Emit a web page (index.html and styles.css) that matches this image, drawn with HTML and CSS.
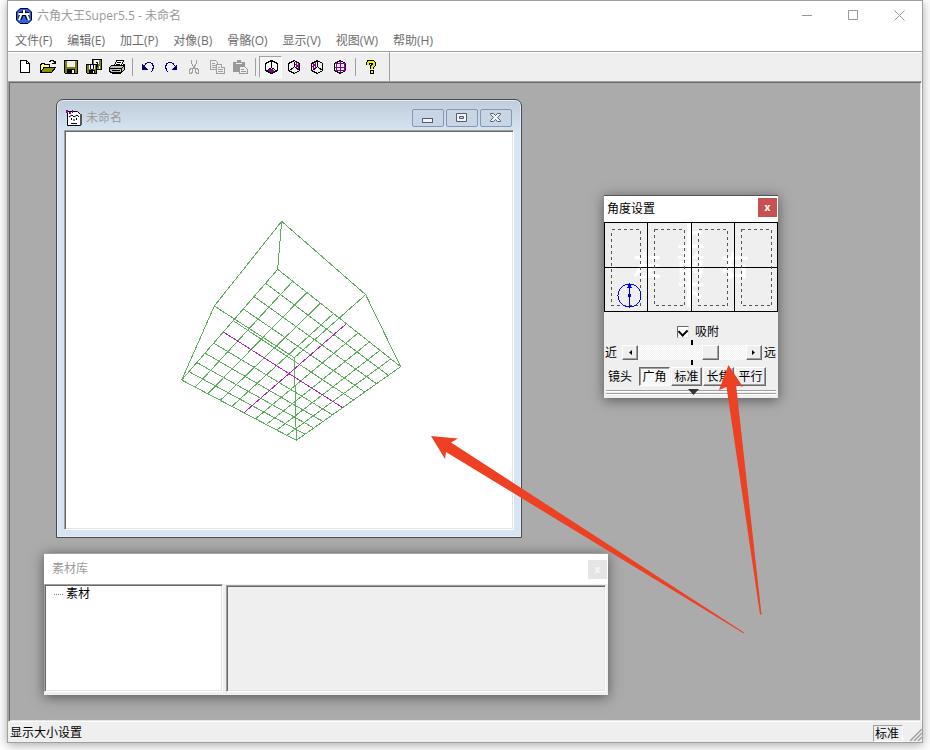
FILE: index.html
```html
<!DOCTYPE html>
<html lang="zh-CN">
<head>
  <meta charset="UTF-8">
  <meta name="viewport" content="width=device-width, initial-scale=1">
  <title>六角大王Super5.5 - 未命名</title>
  <link rel="stylesheet" href="styles.css">
</head>
<body>
  <div class="app">
    <header class="titlebar">
      <svg class="app-icon" width="16" height="16" viewBox="0 0 16 16">
        <path d="M4 .5h8L15.500 4v8L12 15.500H4L.5 12V4z" fill="#2c62e8" stroke="#000"/>
        <path d="M8 2.500v2M3 6h10M5.500 7L3.500 11.500M10.500 7l2 4.500" fill="none" stroke="#000" stroke-width="4"/>
        <path d="M8 2v3M2.500 6h11M5.500 6L3 12M10.500 6l2.500 6" fill="none" stroke="#fff" stroke-width="2"/>
      </svg>
      <h1>六角大王Super5.5 - 未命名</h1>
      <div class="win-buttons">
        <button aria-label="最小化"><svg width="11" height="11"><path d="M0 5.500h10"/></svg></button>
        <button aria-label="最大化"><svg width="11" height="11"><path d="M.5.5h9v9h-9z"/></svg></button>
        <button aria-label="关闭"><svg width="11" height="11"><path d="M.5.5l10 10M10.500.5l-10 10"/></svg></button>
      </div>
    </header>

    <nav class="menubar">
      <button>文件(F)</button>
      <button>编辑(E)</button>
      <button>加工(P)</button>
      <button>对像(B)</button>
      <button>骨骼(O)</button>
      <button>显示(V)</button>
      <button>视图(W)</button>
      <button>帮助(H)</button>
    </nav>

    <div class="toolbar">
      <div class="tools">
        <button aria-label="新建"><svg viewBox="0 0 16 16"><path d="M3.500 1.500h6l3 3v9h-9z" fill="#fff" stroke="#000"/><path d="M9.500 1.500v3h3" fill="none" stroke="#000"/></svg></button>
        <button aria-label="打开"><svg viewBox="0 0 16 16"><path d="M.5 13.500v-8h1v-1h3v1h5v3" fill="#ffff80" stroke="#000"/><path d="M.5 13.500l3.500-5h11.500l-4 5z" fill="#8c8c00" stroke="#000"/><path d="M9 2.500h1v-1h3v1h1v2M12 4.500h4M15.500 2v3" fill="none" stroke="#000"/></svg></button>
        <button aria-label="保存"><svg viewBox="0 0 16 16"><path d="M1.500 1.500h13v13h-12l-1-1z" fill="#808000" stroke="#000"/><path d="M4 2h8v6H4z" fill="#efefef"/><path d="M4 10h8v4H4z" fill="#000"/><path d="M9 11h2v3H9z" fill="#fff"/></svg></button>
        <button aria-label="全部保存"><svg viewBox="0 0 16 16"><path d="M6.500.5h9v10h-9z" fill="#808000" stroke="#000"/><path d="M8 1h5v4H8z" fill="#fff"/><path d="M.5 5.500h10v9H1.500l-1-1z" fill="#808000" stroke="#000"/><path d="M3 6h6v4H3z" fill="#fff"/><path d="M3 11h6v3H3z" fill="#000"/><path d="M7 12h1v2H7zM13 7h1v3h-1z" fill="#fff"/><path d="M5 5h2v1H5zM4 6h1v4H4zM7 6h1v4H7zM5 10h2v1H5zM10 3h2v1h-2zM11 3h1v5h-1z" fill="#000080"/></svg></button>
        <button aria-label="打印"><svg viewBox="0 0 16 16"><path d="M5.500 6.500l2-5h7l-2 5" fill="#fff" stroke="#000"/><path d="M8 3.500h4M7 5.500h4" stroke="#000"/><path d="M2.500 6.500h11l2-1v5l-3 3h-10l-2-1v-4z" fill="#bbb" stroke="#000"/><path d="M1 9.500h11.500v4M12.500 9.500l3-3M3 11.500h8M3 14.500h9M13.500 12.500l2-2" fill="none" stroke="#000"/><path d="M8 10h2v1H8z" fill="#e8e800"/></svg></button>
        <span class="sep"></span>
        <button aria-label="撤销"><svg viewBox="0 0 16 16"><path d="M3.500 8l2-3 2-1.500h3l2 1.500 1 3-1 3-1 2" fill="none" stroke="#000080"/><path d="M2 5v6h6z" fill="#000080"/></svg></button>
        <button aria-label="重做"><svg viewBox="0 0 16 16"><path d="M12.500 8l-2-3-2-1.500h-3l-2 1.500-1 3 1 3 1 2" fill="none" stroke="#000080"/><path d="M14 5v6H8z" fill="#000080"/></svg></button>
        <button aria-label="剪切"><svg viewBox="0 0 16 16" fill="none" stroke="#a0a0a0"><path d="M5.500 1v3l4 7M10.500 1v3l-4 7"/><path d="M4.500 9.500h2v3l-1 2h-2v-3zM9.500 9.500h2l1 2v3h-2l-1-2z"/></svg></button>
        <button aria-label="复制"><svg viewBox="0 0 16 16" fill="#efefef" stroke="#a0a0a0"><path d="M1.500 1.500h5l2 2v7h-7z"/><path d="M3 4.500h3M3 6.500h4M3 8.500h4"/><path d="M7.500 5.500h5l3 3v6h-8z"/><path d="M12.500 5.500v3h3M9 8.500h2M9 10.500h5M9 12.500h5"/></svg></button>
        <button aria-label="粘贴"><svg viewBox="0 0 16 16"><path d="M1 3h4V1h4v2h4v10H1z" fill="#999"/><path d="M4 4h6v1H4z" fill="#efefef"/><path d="M7.500 7.500h5l3 3v4h-8z" fill="#efefef" stroke="#999"/><path d="M9 10.500h3M9 12.500h5" stroke="#999"/></svg></button>
        <span class="sep"></span>
        <button class="on" aria-label="底面网格" aria-pressed="true"><svg viewBox="0 0 16 16"><path d="M5 12l3-2 3 2-3 2zM6 11l4 3M10 11l-4 3" fill="none" stroke="#900090"/><path d="M8.500 1.500l6 3v7l-6 3-6-3v-7zM8.500 2v7M8 9l-5 3M9 9l5 3" fill="none" stroke="#000"/></svg></button>
        <button aria-label="右面网格"><svg viewBox="0 0 16 16"><path d="M10.500 3v6M12.500 4v7M9 5l4 3" fill="none" stroke="#900090"/><path d="M8.500 1.500l5 3v7l-5 3-6-3v-7zM8 8l-5 4M9 8l5 4M8.500 8V3" fill="none" stroke="#000"/></svg></button>
        <button aria-label="左面网格"><svg viewBox="0 0 16 16"><path d="M4.500 4v7M6.500 3v6M3 8l4-3" fill="none" stroke="#900090"/><path d="M8.500 1.500l5 3v7l-5 3-6-3v-7zM8 8l-5 4M9 8l5 4M8.500 8V2" fill="none" stroke="#000"/></svg></button>
        <button aria-label="正面网格"><svg viewBox="0 0 16 16"><path d="M8.500 1.500l5 3v7l-5 3-6-3v-7z" fill="none" stroke="#000"/><path d="M3 4.500h11M3 11.500h11M4.500 4v8M12.500 4v8M3 8.500h11M8.500 2v12" fill="none" stroke="#900090"/></svg></button>
        <span class="sep"></span>
        <button aria-label="帮助"><svg viewBox="0 0 16 16"><path d="M5 6V4l1-1.500h3.500L11 4v2L8.500 8v2" fill="none" stroke="#000" stroke-width="4"/><path d="M6.500 11h4v4h-4z"/><path d="M5 6V4l1-1.500h3.500L11 4v2L8.500 8v2" fill="none" stroke="#f0e800" stroke-width="2"/><path d="M7.500 12h2v2h-2z" fill="#f0e800"/></svg></button>
      </div>
    </div>

    <main class="desktop">
      <section class="window model-window">
        <div class="model-title">
          <svg width="16" height="16" viewBox="0 0 16 16">
            <path d="M1.500 1.500h10l3 3v11h-13z" fill="#fff" stroke="#000"/>
            <path d="M15 4v11" fill="none" stroke="#555" stroke-width="2"/>
            <path d="M0 0h2v3H0zM3 2h2v2H3zM6 0h1v3H6z" fill="#900090"/>
            <path d="M3 7l3-2 2 2 3-2 2 2M5.500 8v2M10.500 8v2M8 9v2M5 13.500h6" fill="none" stroke="#000"/>
          </svg>
          <h2>未命名</h2>
          <div class="model-buttons">
            <button aria-label="最小化"><svg width="14" height="12"><rect x="1.500" y="6.500" width="10" height="4"/></svg></button>
            <button aria-label="最大化"><svg width="14" height="12"><path d="M1.500 1.500h10v8h-10zM4.500 4.500v2h4v-2z" fill-rule="evenodd"/></svg></button>
            <button aria-label="关闭"><svg width="14" height="12"><path d="M1.500 1.500h3l2 2 2-2h3v1l-3 3 3 3v1h-3l-2-2-2 2h-3v-1l3-3-3-3z"/></svg></button>
          </div>
        </div>
        <div class="canvas">
          <svg class="wire" width="240" height="240" viewBox="0 0 720 720">
            <!-- floor grid -->
            <path d="M323 178L692 470M288 221L655 496M251 259L619 521M220 297L584 546M188 331L550 570M131 399L487 614M106 430L458 634M81 458L430 653M57 485L404 672M35 510L379 691"/>
            <path d="M323 178L35 510M368 214L76 531M410 248L114 551M450 281L151 571M490 311L186 589M563 370L257 626M598 396L290 643M630 421L321 660M662 447L350 676M692 470L379 691"/>
            <!-- box edges -->
            <path d="M335 34L133 288L373 443L587 254zM335 34L323 178M133 288L35 510M587 254L692 470M373 443L379 691"/>
            <path class="axis" d="M160 366L518 593M527 343L222 608"/>
          </svg>
        </div>
      </section>

      <section class="window library">
        <div class="panel-title muted">
          <h2>素材库</h2>
          <button class="close" aria-label="关闭">x</button>
        </div>
        <div class="library-body">
          <ul class="tree"><li>素材</li></ul>
          <div class="preview"></div>
        </div>
      </section>

      <section class="window angle">
        <div class="panel-title">
          <h2>角度设置</h2>
          <button class="close" aria-label="关闭">x</button>
        </div>
        <div class="angle-map">
          <div class="faces">
            <span class="up">上</span>
            <span class="left">左</span>
            <span class="front">前</span>
            <span class="right">右</span>
            <span class="down">下</span>
          </div>
          <svg width="174" height="90" viewBox="0 0 174 90">
            <path d="M83 1h4v84h-4z" fill="#fff"/>
            <path d="M.5.5h173v89H.5zM0 45.500h174M43.500 0v90M87.500 0v90M130.500 0v90" fill="none" stroke="#000"/>
            <g fill="none" stroke="#555" stroke-dasharray="3 3">
              <rect x="7.500" y="7.500" width="29" height="76"/>
              <rect x="50.500" y="7.500" width="30" height="76"/>
              <rect x="94.500" y="7.500" width="29" height="76"/>
              <rect x="137.500" y="7.500" width="30" height="76"/>
            </g>
            <g stroke="#0000f0" fill="none">
              <circle cx="25.500" cy="73.500" r="11.500"/>
              <path d="M25.500 61v25M23 66l2.500-3 2.500 3"/>
              <path d="M24 72h3v3h-3zM24 64h3v2h-3z" fill="#0000f0" stroke="none"/>
            </g>
          </svg>
        </div>
        <label class="snap"><input type="checkbox" checked>吸附</label>
        <div class="distance">
          <label for="dist">近</label>
          <button class="step" aria-label="拉近"><svg width="5" height="7"><path d="M4 1v5L1 3.500z"/></svg></button>
          <input id="dist" type="range" min="0" max="100" value="70">
          <button class="step" aria-label="拉远"><svg width="5" height="7"><path d="M1 1v5l3-2.500z"/></svg></button>
          <span>远</span>
        </div>
        <div class="lens">
          <span>镜头</span>
          <button class="on" aria-pressed="true">广角</button>
          <button>标准</button>
          <button>长焦</button>
          <button>平行</button>
        </div>
        <div class="fold"><svg width="11" height="6"><path d="M0 0h11L5.500 6z" fill="#333"/></svg></div>
      </section>

      <svg class="arrows" width="340" height="280" viewBox="425 360 340 280">
        <path d="M431 436l27 2.500-7 4L744 632.500l-.5.800L446 452l-1 7z"/>
        <path d="M728.500 365L743 387l-7-2.500L761.500 614.500h-1.500L726.500 387l-7.500 3z"/>
      </svg>
    </main>

    <footer class="statusbar">
      <span class="message">显示大小设置</span>
      <span class="mode">标准</span>
      <svg class="grip" width="12" height="12"><path d="M0 12L12 0M4 12l8-8M8 12l4-4" stroke="#a0a0a0" stroke-width="1.500"/></svg>
    </footer>
  </div>
</body>
</html>
```

FILE: styles.css
```css
:root {
  --face: #efefef;
  --shade: #a0a0a0;
  --dark: #696969;
  --desk: #ababab;
  --red: #ee4023;
}
* {
  box-sizing: border-box;
  margin: 0;
  padding: 0;
}
body {
  min-height: 100vh;
  padding: 0 7px 7px;
  display: flex;
  background: #fff;
  color: #000;
  font-family: "Open Sans", "Noto Sans CJK SC", sans-serif;
  font-size: 12px;
  line-height: 16px;
  overflow: hidden;
}
button {
  font: inherit;
  color: inherit;
  border: none;
  background: none;
}
h1, h2 {
  font-size: 12px;
  font-weight: 400;
}
.app {
  flex: 1;
  display: flex;
  flex-direction: column;
  border: 1px solid var(--shade);
  background: var(--face);
  box-shadow: 0 2px 10px rgba(0,0,0,0.35);
}

/* Main title and menu */
.titlebar {
  height: 29px;
  padding-left: 8px;
  display: flex;
  align-items: center;
  background: #fff;
  color: #999;
}
.titlebar h1 {
  margin-left: 5px;
}
.win-buttons {
  margin-left: auto;
  display: flex;
}
.win-buttons button {
  width: 46px;
  height: 28px;
  display: flex;
  align-items: center;
  justify-content: center;
}
.win-buttons path {
  fill: none;
  stroke: #999;
}
.menubar {
  height: 21px;
  padding-left: 7px;
  display: flex;
  gap: 15px;
  align-items: center;
  background: #fff;
  color: #6d6d6d;
}

/* Toolbar */
.toolbar {
  height: 30px;
  border-top: 1px solid var(--shade);
  box-shadow: inset 0 1px #fff;
}
.tools {
  width: max-content;
  height: 29px;
  padding: 0 7px 0 5px;
  display: flex;
  align-items: center;
  border-right: 1px solid var(--shade);
}
.tools button {
  width: 23px;
  height: 22px;
  display: flex;
  align-items: center;
  justify-content: center;
}
.tools svg {
  width: 16px;
  height: 16px;
  shape-rendering: crispEdges;
}
.tools .on {
  background: #f7f7f7;
  border: 1px solid;
  border-color: var(--shade) #fff #fff var(--shade);
}
.sep {
  width: 4px;
  height: 18px;
  margin-left: 4px;
  border-left: 1px solid var(--shade);
}

/* Desktop with its windows */
.desktop {
  flex: 1;
  position: relative;
  background: var(--desk);
  border: 1px solid;
  border-color: var(--shade) #fff #fff var(--shade);
  box-shadow: inset 1px 1px var(--dark), inset -1px -1px #e3e3e3;
}
.window {
  position: absolute;
  display: flex;
  flex-direction: column;
}
.model-window {
  left: 47px;
  top: 17px;
  width: 466px;
  height: 439px;
  padding: 0 7px 7px;
  border: 1px solid #484c50;
  border-radius: 7px 7px 0 0;
  background: linear-gradient(#bfcddb, #d7e4f2 32px);
  box-shadow: inset 0 0 0 1px #e4edf7;
}
.model-title {
  height: 30px;
  padding: 5px 2px 0 2px;
  display: flex;
  align-items: center;
}
.model-title h2 {
  margin-left: 4px;
  color: #999;
}
.model-buttons {
  margin-left: auto;
  display: flex;
  gap: 2px;
}
.model-buttons button {
  width: 32px;
  height: 18px;
  display: flex;
  align-items: center;
  justify-content: center;
  border: 1px solid #8796b4;
  border-radius: 2px;
  background: #c8d5e5;
}
.model-buttons svg {
  fill: #f4f4f4;
  stroke: #565a70;
}
.canvas {
  flex: 1;
  padding-left: 1px;
  display: flex;
  align-items: center;
  justify-content: center;
  background: #fff;
  border: 1px solid;
  border-color: var(--shade) #fff #fff var(--shade);
  box-shadow: inset 1px 1px var(--dark), inset -1px -1px #e3e3e3;
}
.wire path {
  fill: none;
  stroke: #5fae5f;
  stroke-width: 3;
  shape-rendering: crispEdges;
}
.wire .axis {
  stroke: #ac2bac;
}

.panel-title {
  height: 26px;
  padding: 0 1px 0 3px;
  display: flex;
  align-items: center;
  justify-content: space-between;
  background: #fff;
}
.panel-title.muted {
  height: 30px;
  padding-left: 8px;
  color: #999;
}
.close {
  width: 19px;
  height: 19px;
  margin-bottom: 4px;
  background: #c75050;
  color: #fff;
  font-size: 10px;
  font-weight: 700;
}
.muted .close {
  margin-bottom: 0;
  background: #e5e5e5;
  color: #f7f7f7;
}
.library, .angle {
  background: var(--face);
  border-top: 1px solid var(--shade);
  box-shadow: 0 2px 12px rgba(0,0,0,0.5);
}
.library {
  left: 35px;
  top: 471px;
  width: 564px;
  height: 142px;
}
.library-body {
  flex: 1;
  display: flex;
  gap: 3px;
  padding: 0 2px 3px 0;
}
.tree {
  width: 179px;
  padding: 1px 0 0 9px;
  list-style: none;
  background: #fff;
}
.tree, .preview {
  border: 1px solid;
  border-color: var(--shade) #fff #fff var(--shade);
  box-shadow: inset 1px 1px var(--dark), inset -1px -1px #e3e3e3;
}
.tree li {
  display: flex;
  align-items: center;
  gap: 3px;
}
.tree li::before {
  content: "";
  width: 9px;
  border-top: 1px dotted #808080;
}
.preview {
  flex: 1;
  margin-top: 1px;
}

/* Angle settings */
.angle {
  left: 595px;
  top: 113px;
  width: 174px;
  border-color: #555;
}
.angle-map, .faces {
  display: grid;
}
/* the viewing directions lie under the grid lines */
.angle-map > * {
  grid-area: 1 / 1;
}
.angle-map svg {
  display: block;
  shape-rendering: crispEdges;
}
.faces {
  grid-template: repeat(3, 29px) / repeat(3, 44px);
  grid-template-areas: ". up ." "left front right" ". down .";
  justify-content: center;
  text-align: center;
  font-family: "Noto Sans CJK SC", sans-serif;
  font-size: 28px;
  line-height: 26px;
  font-weight: 700;
  color: #fff;
}
.up { grid-area: up; }
.left { grid-area: left; }
.front { grid-area: front; }
.right { grid-area: right; }
.down { grid-area: down; }
.snap {
  height: 16px;
  margin: 12px 0 0 73px;
  display: flex;
  align-items: center;
  gap: 6px;
}
.snap input {
  appearance: none;
  width: 12px;
  height: 12px;
  background: #fff;
  border: 1px solid;
  border-color: var(--dark) #e3e3e3 #e3e3e3 var(--dark);
  display: flex;
}
.snap input:checked::before {
  content: "";
  width: 8px;
  height: 5px;
  margin: 1px;
  border: solid #000;
  border-width: 0 0 2px 2px;
  transform: rotate(-45deg);
}
.distance {
  height: 25px;
  padding: 0 2px 0 1px;
  display: flex;
  align-items: center;
  /* centre marks above and below the track */
  background:
    linear-gradient(#000, #000) 87px 0 / 2px 5px no-repeat,
    linear-gradient(#000, #000) 87px 100% / 2px 5px no-repeat;
}
.distance label {
  margin-right: 5px;
}
.distance span {
  margin-left: 2px;
}
.step, .lens button {
  background: var(--face);
  border: 1px solid;
  border-color: #fff var(--dark) var(--dark) #fff;
  box-shadow: inset -1px -1px var(--shade);
}
.step {
  width: 16px;
  height: 15px;
  flex: none;
  display: flex;
  align-items: center;
  justify-content: center;
}
.distance input {
  appearance: none;
  flex: 1;
  min-width: 0;
  height: 15px;
  background: repeating-conic-gradient(#fff 0 25%, #efefef 0 50%) 0 0 / 2px 2px;
}
.distance input::-webkit-slider-thumb {
  appearance: none;
  width: 17px;
  height: 15px;
  background: var(--face);
  border: 1px solid;
  border-color: #fff var(--dark) var(--dark) #fff;
  box-shadow: inset -1px -1px var(--shade);
}
.lens {
  height: 23px;
  padding-left: 4px;
  display: flex;
  align-items: center;
  gap: 1px;
}
.lens span {
  margin-right: 6px;
}
.lens button {
  width: 31px;
  height: 19px;
  line-height: 16px;
}
.lens button.on {
  background: #f7f7f7;
  border-color: var(--dark) #fff #fff var(--dark);
  box-shadow: inset 1px 1px var(--shade);
}
.fold {
  height: 10px;
  padding: 1px 1px 1px 5px;
  display: flex;
  justify-content: center;
  background:
    linear-gradient(var(--shade), var(--shade)) 2px 2px / 170px 1px no-repeat,
    linear-gradient(#fff, #fff) 2px 3px / 170px 1px no-repeat,
    linear-gradient(var(--shade), var(--shade)) 2px 5px / 170px 1px no-repeat,
    linear-gradient(#fff, #fff) 2px 6px / 170px 1px no-repeat;
}

/* Callout arrows lie over everything */
.arrows {
  position: absolute;
  left: 416px;
  top: 278px;
  fill: var(--red);
  pointer-events: none;
}

.statusbar {
  height: 20px;
  padding: 2px 0 0 2px;
  display: flex;
  align-items: center;
}
.message {
  flex: 1;
}
.mode {
  height: 17px;
  width: 30px;
  padding-left: 1px;
  border: 1px solid;
  border-color: var(--shade) #fff #fff var(--shade);
}
.grip {
  margin: 4px 0 0 7px;
}
```
